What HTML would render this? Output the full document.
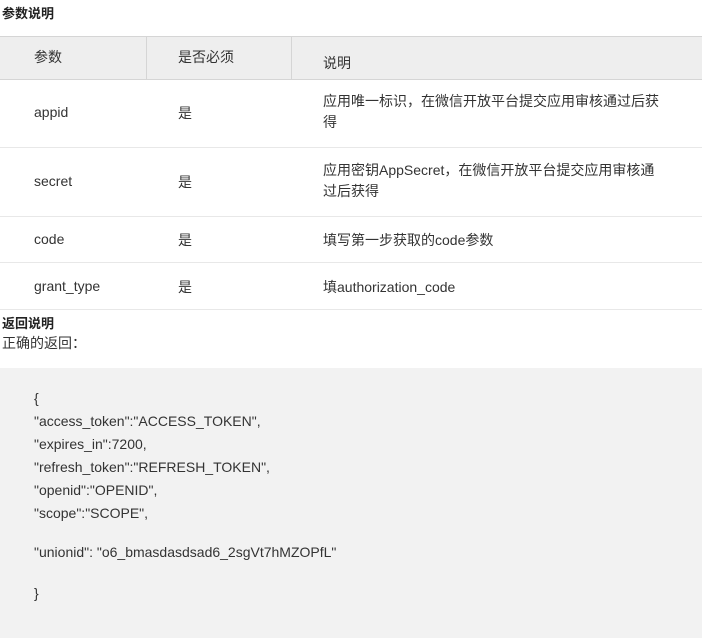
<!DOCTYPE html>
<html><head><meta charset="utf-8"><style>
body{margin:0;width:702px;height:638px;overflow:hidden;background:#fff;font-family:"Liberation Sans","Noto Sans CJK SC",sans-serif;color:#333;font-size:14px;}
.a{position:absolute;white-space:nowrap;}
.b{font-weight:bold;font-size:13px;color:#222}
</style></head><body>
<div class="a b" style="left:2px;top:3px">参数说明</div>
<div class="a" style="left:0;top:36px;width:702px;height:42px;background:#eeeeee;border-top:1px solid #d5d5d5;border-bottom:1px solid #d5d5d5"></div>
<div class="a" style="left:146px;top:37px;width:1px;height:42px;background:#d5d5d5"></div>
<div class="a" style="left:291px;top:37px;width:1px;height:42px;background:#d5d5d5"></div>
<div class="a" style="left:34px;top:47px">参数</div>
<div class="a" style="left:178px;top:47px">是否必须</div>
<div class="a" style="left:323px;top:53px">说明</div>
<div class="a" style="left:0;top:147px;width:702px;height:1px;background:#e8e8e8"></div>
<div class="a" style="left:0;top:216px;width:702px;height:1px;background:#e8e8e8"></div>
<div class="a" style="left:0;top:262px;width:702px;height:1px;background:#e8e8e8"></div>
<div class="a" style="left:0;top:309px;width:702px;height:1px;background:#e8e8e8"></div>
<div class="a" style="left:34px;top:104px">appid</div>
<div class="a" style="left:178px;top:103px">是</div>
<div class="a" style="left:323px;top:91px;line-height:21px">应用唯一标识，在微信开放平台提交应用审核通过后获<br>得</div>
<div class="a" style="left:34px;top:173px">secret</div>
<div class="a" style="left:178px;top:172px">是</div>
<div class="a" style="left:323px;top:160px;line-height:21px">应用密钥AppSecret，在微信开放平台提交应用审核通<br>过后获得</div>
<div class="a" style="left:34px;top:231px">code</div>
<div class="a" style="left:178px;top:230px">是</div>
<div class="a" style="left:323px;top:230px">填写第一步获取的code参数</div>
<div class="a" style="left:34px;top:278px">grant_type</div>
<div class="a" style="left:178px;top:277px">是</div>
<div class="a" style="left:323px;top:277px">填authorization_code</div>
<div class="a b" style="left:2px;top:313px">返回说明</div>
<div class="a" style="left:2px;top:333px;font-size:14px">正确的返回：</div>
<div class="a" style="left:0;top:368px;width:702px;height:270px;background:#f2f2f2"></div>
<div class="a" style="left:34px;top:387px;line-height:23px">{<br>"access_token":"ACCESS_TOKEN",<br>"expires_in":7200,<br>"refresh_token":"REFRESH_TOKEN",<br>"openid":"OPENID",<br>"scope":"SCOPE",<br><div style="height:16px"></div>"unionid": "o6_bmasdasdsad6_2sgVt7hMZOPfL"<br><div style="height:18px"></div>}</div>
</body></html>
